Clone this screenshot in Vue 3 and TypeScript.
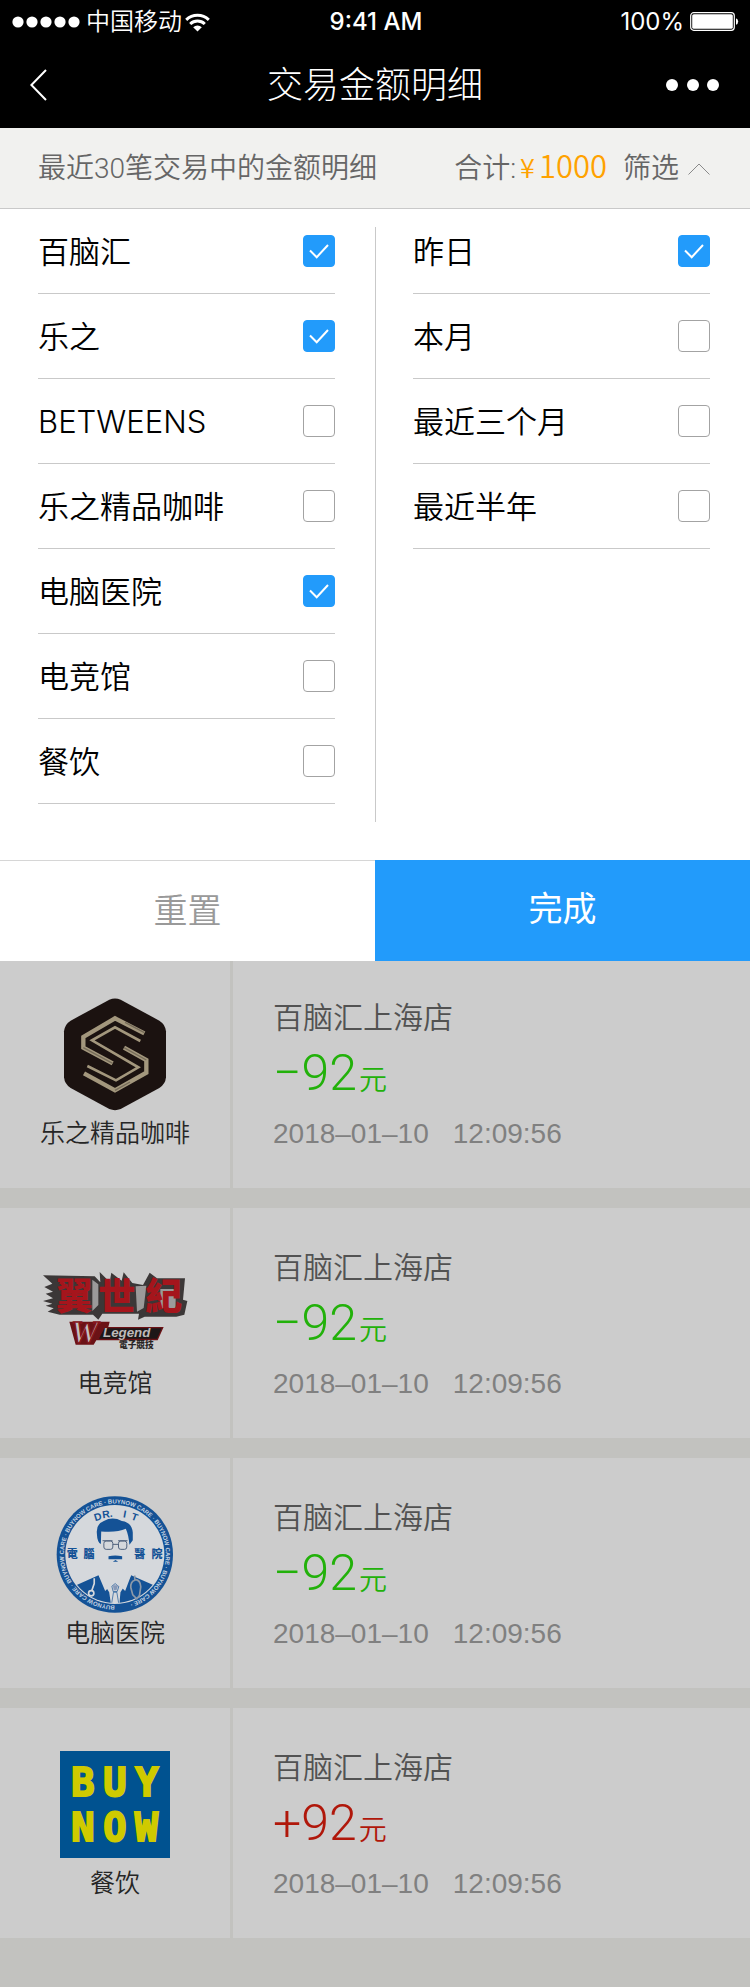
<script setup lang="ts">
import { ref } from 'vue'

interface Option {
  id: string
  label: string
  checked: boolean
}

interface Entry {
  id: number
  logo: 'coffee' | 'esports' | 'clinic' | 'dining'
  name: string
  store: string
  sign: '+' | '−'
  value: number
  date: string
  time: string
}

const shops = ref<Option[]>([
  { id: 'buynow', label: '百脑汇', checked: true },
  { id: 'lezhi', label: '乐之', checked: true },
  { id: 'betweens', label: 'BETWEENS', checked: false },
  { id: 'coffee', label: '乐之精品咖啡', checked: false },
  { id: 'clinic', label: '电脑医院', checked: true },
  { id: 'esports', label: '电竞馆', checked: false },
  { id: 'dining', label: '餐饮', checked: false },
])

const periods = ref<Option[]>([
  { id: 'yesterday', label: '昨日', checked: true },
  { id: 'month', label: '本月', checked: false },
  { id: 'quarter', label: '最近三个月', checked: false },
  { id: 'half', label: '最近半年', checked: false },
])

const store = '百脑汇上海店'
const date = '2018–01–10'
const time = '12:09:56'

const entries: Entry[] = [
  { id: 1, logo: 'coffee', name: '乐之精品咖啡', store, sign: '−', value: 92, date, time },
  { id: 2, logo: 'esports', name: '电竞馆', store, sign: '−', value: 92, date, time },
  { id: 3, logo: 'clinic', name: '电脑医院', store, sign: '−', value: 92, date, time },
  { id: 4, logo: 'dining', name: '餐饮', store, sign: '+', value: 92, date, time },
]

const open = ref(true)

function reset(): void {
  for (const option of [...shops.value, ...periods.value]) option.checked = false
}
</script>

<template>
  <div class="page">
    <header class="top">
      <div class="status">
        <div class="carrier">
          <svg class="signal" viewBox="0 0 67 12" aria-hidden="true">
            <circle v-for="n in 5" :key="n" :cx="n * 14 - 8" cy="6" r="5.6" />
          </svg>
          <span>中国移动</span>
          <svg class="wifi" viewBox="0 0 25 19" aria-hidden="true">
            <path d="M1.2 6.8A16.4 16.4 0 0 1 23.8 6.8" />
            <path d="M5.2 11A10.6 10.6 0 0 1 19.8 11" />
            <path class="solid" d="M8.2 14.2A6.2 6.2 0 0 1 16.8 14.2L12.5 18.6Z" />
          </svg>
        </div>
        <span class="clock">9:41 AM</span>
        <div class="power">
          <span>100%</span>
          <svg class="battery" viewBox="0 0 50 20" aria-hidden="true">
            <rect class="shell" x="0.7" y="0.7" width="43.6" height="17.6" rx="3" />
            <rect x="2.2" y="2.2" width="40.6" height="14.6" rx="1.6" />
            <path d="M46 6.2a3.6 3.6 0 0 1 0 6.6z" />
          </svg>
        </div>
      </div>
      <nav class="nav">
        <button class="icon-button" type="button" aria-label="返回">
          <svg class="back" viewBox="0 0 17 32"><path d="M16 1L1.4 16L16 31" /></svg>
        </button>
        <h1>交易金额明细</h1>
        <button class="icon-button more-button" type="button" aria-label="更多">
          <svg class="more" viewBox="0 0 54 12">
            <circle cx="6" cy="6" r="6" />
            <circle cx="27" cy="6" r="6" />
            <circle cx="47" cy="6" r="6" />
          </svg>
        </button>
      </nav>
    </header>

    <div class="summary">
      <span>最近30笔交易中的金额明细</span>
      <div class="summary-side">
        <span class="total">合计:<b class="yen">¥</b><b class="sum">1000</b></span>
        <button class="toggle" type="button" :aria-expanded="open" @click="open = !open">
          <span>筛选</span>
          <svg class="caret" viewBox="0 0 22 12"><path d="M0.5 11.5L11 1L21.5 11.5" /></svg>
        </button>
      </div>
    </div>

    <form v-if="open" class="filter" @submit.prevent="open = false">
      <div class="columns">
        <ul class="options">
          <li v-for="option in shops" :key="option.id">
            <label :for="option.id">
              <span class="option-name">{{ option.label }}</span>
              <span class="box">
                <input :id="option.id" v-model="option.checked" type="checkbox" />
                <svg viewBox="0 0 32 32" aria-hidden="true"><path d="M7 15.5L13.7 22.2L25 10" /></svg>
              </span>
            </label>
          </li>
        </ul>
        <div class="rule"></div>
        <ul class="options">
          <li v-for="option in periods" :key="option.id">
            <label :for="option.id">
              <span class="option-name">{{ option.label }}</span>
              <span class="box">
                <input :id="option.id" v-model="option.checked" type="checkbox" />
                <svg viewBox="0 0 32 32" aria-hidden="true"><path d="M7 15.5L13.7 22.2L25 10" /></svg>
              </span>
            </label>
          </li>
        </ul>
      </div>
      <div class="actions">
        <button class="reset" type="button" @click="reset">重置</button>
        <button class="done" type="submit">完成</button>
      </div>
    </form>

    <main class="list">
      <article v-for="entry in entries" :key="entry.id" class="entry">
        <div class="brand">
          <div class="logo">
            <svg v-if="entry.logo === 'coffee'" width="102" height="111" viewBox="102 57 306 333">
              <path fill="#1b1210" d="M238 59Q255 52 272 59L388 122Q406 133 408 154V292Q406 313 388 324L272 387Q255 394 238 387L122 324Q104 313 102 292V154Q104 133 122 122Z" />
              <g fill="none" stroke="#a3977d" stroke-linejoin="miter">
                <path stroke-width="13" d="M343 160L255 115L160 171V203L248 250" />
                <path stroke-width="8" d="M331 183L255 142L186 181L325 262L258 301L172 258" />
                <path stroke-width="13" d="M282 203L349 240V278L255 331L162 280" />
              </g>
              <g fill="none" stroke="#756b59" stroke-width="4">
                <path d="M160 203L248 250M282 203L349 240M255 331L300 306M285 127L343 158" />
              </g>
            </svg>

            <svg v-else-if="entry.logo === 'esports'" class="shifted" width="144" height="77" viewBox="40 97 432 231">
              <path fill="#3b3737" d="M40 107L195 110L212 128L210 97L240 127L245 99L276 123L282 98L308 130L340 136L360 99L382 116H466L460 180L473 184L464 225L440 231H345L325 240L328 222H218L206 240L190 225H90L54 216L72 206L48 198L68 192L40 184L70 176L48 162L70 156L44 142L68 132Z" />
              <path fill="#9b9a9a" d="M188 120L206 134V196L188 214ZM318 140L350 138L342 205L322 216ZM392 148H438V205H392Z" />
              <g class="mark" font-size="112" fill="#a5151c" text-anchor="middle">
                <text x="134" y="211">翼</text>
                <text x="262" y="211">世</text>
                <text x="402" y="211">紀</text>
              </g>
              <path fill="#6b1216" d="M119 246H240L236 262H402L384 302H200L192 315H138Z" />
              <path fill="#1d1718" d="M224 266H396L382 297H208Z" />
              <text class="script" x="124" y="310" font-size="92" fill="#c4c2c2" stroke="#84141a" stroke-width="4">W</text>
              <text class="script-sans" x="220" y="293" font-size="40" fill="#bdbaba">Legend</text>
              <text class="mark" x="268" y="325" font-size="26" fill="#2a2525">電子競技</text>
            </svg>

            <svg v-else-if="entry.logo === 'clinic'" width="118" height="117" viewBox="78 45 355 351">
              <defs>
                <path id="ring" d="M255 374A153.500 153.500 0 0 1 255 67A153.500 153.500 0 0 1 255 374" />
                <clipPath id="disc"><circle cx="255" cy="220" r="146" /></clipPath>
              </defs>
              <circle cx="255" cy="220.500" r="175" fill="#145296" />
              <circle cx="255" cy="220.500" r="149" fill="#d5d8dc" />
              <text class="ring-text" font-size="18" fill="#c4d2e2">
                <textPath href="#ring">BUYNOW CARE · BUYNOW CARE · BUYNOW CARE · BUYNOW CARE · BUYNOW CARE · BUYNOW CARE ·</textPath>
              </text>
              <g clip-path="url(#disc)" fill="#145296">
                <path d="M100 330L206 283L226 330L238 318L246 326L242 380H100ZM410 330L304 283L286 330L274 318L266 326L270 380H410Z" />
                <path d="M206 283L238 334L244 375H268L272 334L304 283L258 316Z" fill="#d5d8dc" />
                <path d="M246 316L256 308L267 317L262 332H250ZM251 334H261L268 376H244Z" fill="#d5d8dc" stroke="#145296" stroke-width="2" />
                <path d="M249 313H265L260 328H252Z" fill="#8799b8" />
              </g>
              <path fill="#145296" d="M201 158Q198 128 222 120Q248 105 276 120Q306 124 309 154V178L299 191Q296 160 288 143Q262 155 214 151L213 189Q202 184 201 158ZM236 226Q256 221 277 226V235H236ZM249 242L257 237L265 242Z" />
              <g fill="none" stroke="#50627d" stroke-width="3">
                <path d="M218 179H248M265 179H293M249 190H266" />
                <rect x="222" y="180" width="27" height="25" rx="7" />
                <rect x="266" y="180" width="25" height="25" rx="7" />
              </g>
              <g fill="none" stroke="#d5d8dc" stroke-width="5">
                <path d="M193 292V308L186 328" /><circle cx="184" cy="337" r="8" />
                <path stroke="#8d99a8" d="M315 284V298Q302 302 303 320L309 342L321 354L329 344L333 318Q332 296 316 296" />
              </g>
              <g class="initials" font-size="31" fill="#145296" text-anchor="middle">
                <text x="207" y="117" transform="rotate(-17 207 117)">D</text>
                <text x="234" y="109" transform="rotate(-8 234 109)">R.</text>
                <text x="283" y="109" transform="rotate(10 283 109)">I</text>
                <text x="311" y="118" transform="rotate(20 311 118)">T</text>
              </g>
              <g class="mark" font-size="33" fill="#145296" text-anchor="middle">
                <text x="127" y="231">電</text><text x="177" y="231">腦</text>
                <text x="330" y="231">醫</text><text x="382" y="231">院</text>
              </g>
            </svg>

            <svg v-else width="110" height="107" viewBox="90 63 330 321">
              <rect x="90" y="63" width="330" height="321" fill="#005290" />
              <g class="pixel" font-size="116" fill="#cfca00" stroke="#cfca00" stroke-width="6" text-anchor="middle">
                <text x="159" y="197">B</text><text x="255" y="197">U</text><text x="351" y="197">Y</text>
                <text x="159" y="334">N</text><text x="255" y="334">O</text><text x="349" y="334">W</text>
              </g>
            </svg>
          </div>
          <span class="brand-name">{{ entry.name }}</span>
        </div>
        <div class="detail">
          <h2>{{ entry.store }}</h2>
          <p class="amount" :class="{ income: entry.sign === '+' }">
            {{ entry.sign }}{{ entry.value }}<span class="unit">元</span>
          </p>
          <p class="when"><span>{{ entry.date }}</span><span>{{ entry.time }}</span></p>
        </div>
      </article>
    </main>
  </div>
</template>

<style>
body {
  margin: 0;
  background: #c2c2bf;
}
</style>

<style scoped>
.page {
  min-height: 100vh;
  background: #c2c2bf;
  font-family: Roboto, "Noto Sans CJK SC", sans-serif;
  font-weight: 350;
  color: #000;
}

h1,
h2,
p,
ul {
  margin: 0;
  padding: 0;
  font-weight: inherit;
  list-style: none;
}

button {
  margin: 0;
  padding: 0;
  border: 0;
  background: none;
  color: inherit;
  font: inherit;
  cursor: pointer;
}

svg {
  display: block;
  flex: none;
  overflow: visible;
}

.top {
  background: #000;
  color: #fff;
}

.status {
  display: grid;
  grid-template-columns: 1fr auto 1fr;
  align-items: center;
  height: 40px;
  padding: 2px 10px 0 12px;
  font-size: 24px;
  line-height: 32px;
}

.carrier,
.power {
  display: flex;
  align-items: center;
}

.carrier {
  gap: 3px;
}

.signal {
  width: 67px;
  height: 12px;
  margin-right: 4px;
  fill: #fff;
}

.wifi {
  width: 25px;
  height: 19px;
  fill: none;
  stroke: #fff;
  stroke-width: 3;
}

.wifi .solid {
  fill: #fff;
  stroke: none;
}

.clock {
  font-family: Inter, sans-serif;
  font-weight: 500;
}

.power {
  justify-content: flex-end;
  gap: 6px;
  font-family: Inter, sans-serif;
  font-weight: 400;
}

.battery {
  width: 50px;
  height: 20px;
  fill: #fff;
}

.battery .shell {
  fill: none;
  stroke: #fff;
  stroke-width: 1.2;
}

.nav {
  display: grid;
  grid-template-columns: 1fr auto 1fr;
  align-items: center;
  height: 86px;
  padding: 0 30px;
}

.nav h1 {
  padding-top: 2px;
  font-size: 36px;
  font-weight: 300;
  line-height: 48px;
}

.icon-button {
  justify-self: start;
}

.more-button {
  justify-self: end;
}

.back {
  width: 17px;
  height: 32px;
  fill: none;
  stroke: #fff;
  stroke-width: 2;
}

.more {
  width: 54px;
  height: 12px;
  fill: #fff;
}

.summary {
  display: flex;
  align-items: baseline;
  justify-content: space-between;
  padding: 21px 40px 19px 38px;
  border-bottom: 1px solid #c9c9c9;
  background: #f1f1ef;
  color: #666;
  font-size: 28px;
  line-height: 40px;
}

.summary-side {
  display: flex;
  align-items: baseline;
  gap: 16px;
  height: 40px;
}

.total b {
  color: #ffa200;
  font-family: "Noto Sans CJK SC", sans-serif;
  font-weight: 350;
  line-height: 1;
}

.yen {
  margin: 0 4px;
  font-size: 27px;
}

.sum {
  font-size: 31px;
}

.toggle {
  display: flex;
  align-items: center;
  gap: 9px;
}

.caret {
  width: 22px;
  height: 12px;
  fill: none;
  stroke: #8a8a8a;
  stroke-width: 1;
}

.filter {
  background: #fff;
}

.columns {
  display: grid;
  grid-template-columns: 1fr 0 1fr;
  padding-bottom: 56px;
}

.rule {
  width: 1px;
  margin: 18px 0 -18px;
  background: #c9c9c9;
}

.options {
  padding: 0 40px 0 38px;
}

.options li {
  border-bottom: 1px solid #c9c9c9;
}

.options label {
  display: flex;
  align-items: center;
  justify-content: space-between;
  height: 84px;
  cursor: pointer;
}

.option-name {
  padding-top: 1px;
  font-family: Inter, "Noto Sans CJK SC", sans-serif;
  font-size: 31px;
  line-height: 40px;
}

.box {
  display: grid;
}

.box input,
.box svg {
  grid-area: 1 / 1;
  width: 32px;
  height: 32px;
}

.box input {
  box-sizing: border-box;
  margin: 0;
  appearance: none;
  border: 1px solid #a3a3a3;
  border-radius: 4px;
  background: #fff;
}

.box input:checked {
  border-color: #229bfb;
  background: #229bfb;
}

.box svg {
  visibility: hidden;
  fill: none;
  stroke: #fff;
  stroke-width: 2;
  pointer-events: none;
}

.box input:checked + svg {
  visibility: visible;
}

.actions {
  display: grid;
  grid-template-columns: 1fr 1fr;
  height: 101px;
  font-size: 34px;
  line-height: 48px;
}

.reset {
  border-top: 1px solid #d6d6d6;
  color: #999;
}

.done {
  padding-bottom: 4px;
  background: #229bfb;
  color: #fff;
  font-weight: 400;
}

.list {
  display: grid;
  gap: 20px;
}

.entry {
  display: flex;
  height: 230px;
}

.entry:first-child {
  height: 227px;
}

.entry:first-child .logo {
  margin-top: 35px;
}

.entry:first-child .detail {
  padding-top: 37px;
}

.brand {
  box-sizing: border-box;
  display: flex;
  flex: none;
  flex-direction: column;
  align-items: center;
  width: 233px;
  border-right: 3px solid #c2c2bf;
  background: #ccc;
}

.logo {
  display: flex;
  align-items: center;
  height: 116px;
  margin: 38px 0 4px;
}

.shifted {
  margin-top: 12px;
}

.brand-name {
  color: #262626;
  font-size: 25px;
  line-height: 36px;
}

.detail {
  flex: 1;
  padding: 40px 20px 0 40px;
  background: #ccc;
}

.detail h2 {
  color: #525252;
  font-size: 30px;
  line-height: 40px;
}

.amount {
  display: flex;
  align-items: baseline;
  gap: 2px;
  margin: 4px 0;
  color: #22b10a;
  font-size: 50px;
  line-height: 62px;
}

.amount.income {
  color: #b0170a;
}

.unit {
  font-size: 28px;
}

.when {
  display: flex;
  gap: 24px;
  color: #808080;
  font-family: "Liberation Sans", sans-serif;
  font-size: 28px;
  line-height: 36px;
}

.mark {
  font-family: "Noto Sans CJK TC", sans-serif;
  font-weight: 900;
}

.script {
  font-family: "Liberation Serif", serif;
  font-style: italic;
  font-weight: 700;
}

.script-sans {
  font-family: "Liberation Sans", sans-serif;
  font-style: italic;
  font-weight: 700;
}

.ring-text,
.initials {
  font-family: "Liberation Sans", sans-serif;
  font-weight: 700;
}

.pixel {
  font-family: "DejaVu Sans Mono", monospace;
  font-weight: 700;
}
</style>
